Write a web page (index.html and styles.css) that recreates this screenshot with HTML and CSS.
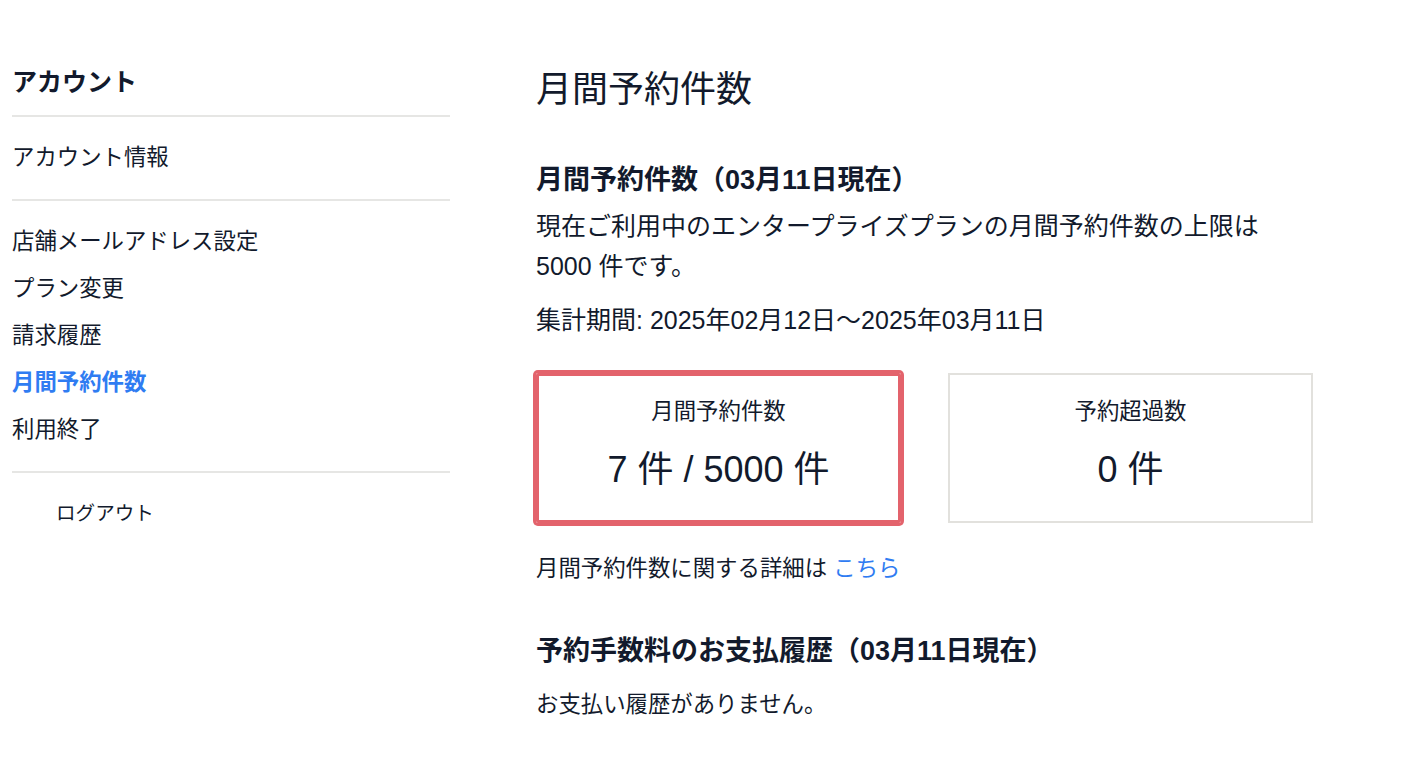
FILE: index.html
```html
<!DOCTYPE html>
<html lang="ja">
<head>
<meta charset="utf-8">
<title>月間予約件数</title>
<link rel="stylesheet" href="styles.css">
</head>
<body>
<div class="page">
  <aside class="sidebar">
    <div class="side-title">アカウント</div>
    <nav class="side-section">
      <a class="side-item">アカウント情報</a>
    </nav>
    <nav class="side-section">
      <a class="side-item">店舗メールアドレス設定</a>
      <a class="side-item">プラン変更</a>
      <a class="side-item">請求履歴</a>
      <a class="side-item active">月間予約件数</a>
      <a class="side-item">利用終了</a>
    </nav>
    <div class="logout">ログアウト</div>
  </aside>
  <main class="content">
    <h1 class="page-title">月間予約件数</h1>
    <h2 class="section-title">月間予約件数（03月11日現在）</h2>
    <p class="lead">現在ご利用中のエンタープライズプランの月間予約件数の上限は<br>5000 件です。</p>
    <p class="period">集計期間: 2025年02月12日～2025年03月11日</p>
    <div class="cards">
      <div class="card highlight">
        <div class="card-label">月間予約件数</div>
        <div class="card-value">7 件 / 5000 件</div>
      </div>
      <div class="card">
        <div class="card-label">予約超過数</div>
        <div class="card-value">0 件</div>
      </div>
    </div>
    <p class="detail">月間予約件数に関する詳細は <a class="link">こちら</a></p>
    <h2 class="section-title second">予約手数料のお支払履歴（03月11日現在）</h2>
    <p class="empty">お支払い履歴がありません。</p>
  </main>
</div>
</body>
</html>
```

FILE: styles.css
```css
* { box-sizing: border-box; }
html, body { margin: 0; padding: 0; background: #ffffff; }
body {
  font-family: "Liberation Sans", "Noto Sans CJK JP", sans-serif;
  color: #121a2c;
}
.page {
  display: flex;
  gap: 86px;
  padding: 64px 0 0 12px;
}
.sidebar {
  width: 438px;
  flex: none;
}
.side-title {
  font-size: 25px;
  font-weight: 700;
  line-height: 36px;
  padding-bottom: 15px;
  border-bottom: 2px solid #e6e6e4;
}
.side-section {
  display: flex;
  flex-direction: column;
  padding: 17px 0 18px;
  border-bottom: 2px solid #e6e6e4;
}
.side-item {
  font-size: 22.4px;
  line-height: 47px;
  height: 47px;
  color: #121a2c;
  text-decoration: none;
}
.side-item.active {
  color: #2f7cf2;
  font-weight: 700;
}
.logout {
  font-size: 19.6px;
  line-height: 47px;
  padding: 17px 0 0 44px;
}
.content {
  width: 777px;
  flex: none;
}
.page-title {
  margin: 0;
  font-size: 36px;
  font-weight: 400;
  line-height: 52px;
}
.section-title {
  margin: 46px 0 0;
  font-size: 27px;
  font-weight: 700;
  line-height: 36px;
}
.section-title.second {
  margin-top: 48px;
}
.lead {
  margin: 8px 0 0;
  font-size: 25px;
  line-height: 40px;
}
.period {
  margin: 14px 0 0;
  font-size: 25px;
  line-height: 40px;
}
.cards {
  display: grid;
  grid-template-columns: 365px 365px;
  gap: 47px;
  margin-top: 33px;
}
.card {
  height: 150px;
  border: 2px solid #e2e1dd;
  padding-top: 21px;
  text-align: center;
}
.card.highlight {
  border: 3px solid #e3636c;
  box-shadow: 0 0 0 3px #e3636c;
  padding-top: 20px;
  border-radius: 2px;
}
.card-label {
  font-size: 22.4px;
  line-height: 32px;
}
.card-value {
  margin-top: 19px;
  font-size: 36px;
  line-height: 46px;
}
.detail {
  margin: 30px 0 0;
  font-size: 22.4px;
  line-height: 32px;
}
.link {
  color: #2f7cf2;
  text-decoration: none;
}
.empty {
  margin: 20px 0 0;
  font-size: 22.4px;
  line-height: 32px;
}
```
